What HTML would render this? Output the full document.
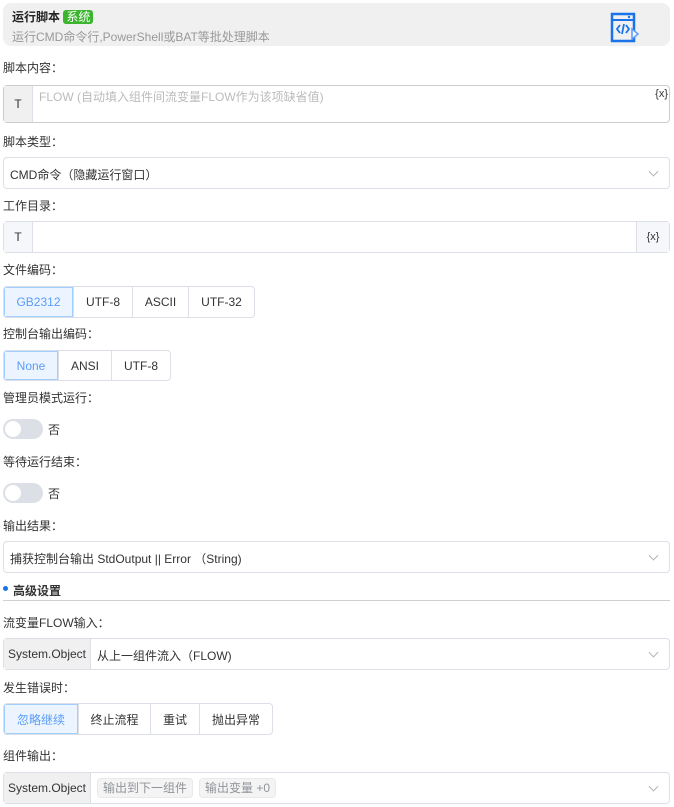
<!DOCTYPE html>
<html><head><meta charset="utf-8"><style>
*{box-sizing:border-box;margin:0;padding:0}
body{width:674px;height:807px;background:#fff;font-family:"Liberation Sans","Noto Sans CJK SC",sans-serif;font-size:12px;color:#333;position:relative;overflow:hidden}
.a{position:absolute}
.lbl{position:absolute;left:3px;font-size:12px;color:#333;line-height:14px}
.box{position:absolute;left:3px;width:667px;border:1px solid #dcdfe6;border-radius:4px;background:#fff}
.pre{position:absolute;left:0;top:0;bottom:0;background:#f5f7fa;border-right:1px solid #dcdfe6;display:flex;align-items:center;justify-content:center;color:#333}
.arrow{position:absolute;right:12px;top:50%;width:7px;height:7px;border-right:1px solid #b0b3b8;border-bottom:1px solid #b0b3b8;transform:translateY(-70%) rotate(45deg)}
.grp{position:absolute;left:3px;display:flex;border:1px solid #dcdfe6;border-radius:4px;overflow:hidden}
.grp div{display:flex;align-items:center;justify-content:center;border-left:1px solid #dcdfe6;color:#333;height:100%}
.grp div:first-child{border-left:none;background:#ecf5ff;color:#5a9cf8;box-shadow:inset 0 0 0 1px #a0cfff}
.tg{position:absolute;left:3px;width:40px;height:20px;border-radius:10px;background:#dcdfe6}
.tg::after{content:"";position:absolute;left:2px;top:2px;width:16px;height:16px;border-radius:50%;background:#fff}
.tag{display:inline-block;background:#f4f4f5;border:1px solid #e9e9eb;color:#909399;border-radius:4px;padding:0 5px;height:20px;line-height:18px;margin-right:6px}
</style></head><body>
<div class="a" style="left:3px;top:3px;width:667px;height:43px;background:#f0f0f0;border-radius:8px"></div>
<div class="a" style="left:12px;top:8px;font-weight:bold;font-size:12px;color:#222">运行脚本 <span style="background:#3cb52e;color:#fff;font-weight:normal;padding:0 3px;border-radius:3px">系统</span></div>
<div class="a" style="left:12px;top:28px;color:#999;font-size:12px">运行CMD命令行,PowerShell或BAT等批处理脚本</div>
<svg class="a" style="left:610px;top:12px" width="30" height="32" viewBox="0 0 30 32"><rect x="2" y="2" width="22" height="27" fill="none" stroke="#1a73e8" stroke-width="2.5"/><line x1="2" y1="8" x2="24" y2="8" stroke="#1a73e8" stroke-width="2"/><circle cx="19" cy="5" r="1.2" fill="#1a73e8"/><path d="M10 13 L7 17 L10 21 M16 13 L19 17 L16 21 M14 12 L12 22" fill="none" stroke="#1a73e8" stroke-width="1.8"/><path d="M22 17 L28 22 L22 27 Z" fill="#fff" stroke="#5a9cf8" stroke-width="1.5"/></svg>

<div class="lbl" style="top:61px">脚本内容：</div>
<div class="box" style="top:85px;height:38px;border-color:#ccc"><div class="pre" style="width:29px;background:#f0f0f0">T</div><div class="a" style="left:35px;top:2px;color:#bbb">FLOW (自动填入组件间流变量FLOW作为该项缺省值)</div><div class="a" style="right:1px;top:2px;font-size:11px">{x}</div></div>

<div class="lbl" style="top:135px">脚本类型：</div>
<div class="box" style="top:157px;height:32px"><div class="a" style="left:6px;top:8px">CMD命令（隐藏运行窗口）</div><div class="arrow"></div></div>

<div class="lbl" style="top:199px">工作目录：</div>
<div class="box" style="top:221px;height:32px"><div class="pre" style="width:29px">T</div><div class="a" style="right:0;top:0;bottom:0;width:33px;background:#f5f7fa;border-left:1px solid #dcdfe6;display:flex;align-items:center;justify-content:center;font-size:11px">{x}</div></div>

<div class="lbl" style="top:263px">文件编码：</div>
<div class="grp" style="top:286px;height:32px"><div style="width:69px">GB2312</div><div style="width:59px">UTF-8</div><div style="width:56px">ASCII</div><div style="width:66px">UTF-32</div></div>

<div class="lbl" style="top:327px">控制台输出编码：</div>
<div class="grp" style="top:350px;height:31px"><div style="width:54px">None</div><div style="width:53px">ANSI</div><div style="width:59px">UTF-8</div></div>

<div class="lbl" style="top:391px">管理员模式运行：</div>
<div class="tg" style="top:419px"></div><div class="a" style="left:48px;top:421px">否</div>

<div class="lbl" style="top:455px">等待运行结束：</div>
<div class="tg" style="top:483px"></div><div class="a" style="left:48px;top:485px">否</div>

<div class="lbl" style="top:519px">输出结果：</div>
<div class="box" style="top:541px;height:32px"><div class="a" style="left:6px;top:8px">捕获控制台输出 StdOutput || Error （String)</div><div class="arrow"></div></div>

<div class="a" style="left:3px;top:586px;width:5px;height:5px;border-radius:50%;background:#1a73e8"></div>
<div class="a" style="left:13px;top:582px;font-weight:bold">高级设置</div>
<div class="a" style="left:3px;top:600px;width:667px;height:1px;background:#d0d0d0"></div>

<div class="lbl" style="top:616px">流变量FLOW输入：</div>
<div class="box" style="top:638px;height:32px"><div class="pre" style="width:87px;background:#f0f0f0">System.Object</div><div class="a" style="left:93px;top:8px">从上一组件流入（FLOW)</div><div class="arrow"></div></div>

<div class="lbl" style="top:681px">发生错误时：</div>
<div class="grp" style="top:703px;height:32px"><div style="width:74px">忽略继续</div><div style="width:72px">终止流程</div><div style="width:49px">重试</div><div style="width:73px">抛出异常</div></div>

<div class="lbl" style="top:749px">组件输出：</div>
<div class="box" style="top:772px;height:32px"><div class="pre" style="width:87px;background:#f0f0f0">System.Object</div><div class="a" style="left:93px;top:5px"><span class="tag">输出到下一组件</span><span class="tag">输出变量 +0</span></div><div class="arrow"></div></div>
</body></html>
